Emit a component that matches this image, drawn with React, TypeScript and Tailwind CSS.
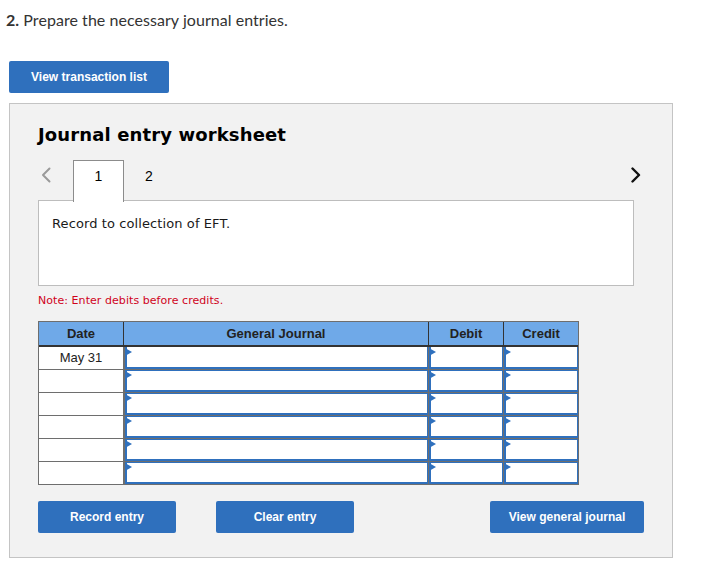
const rows = ["May 31", "", "", "", "", ""];

function Chevron({ dir, color, sw }: { dir: "left" | "right"; color: string; sw: string }) {
  return (
    <svg width="10" height="16" viewBox="0 0 10 16" fill="none">
      <path d={dir === "left" ? "M8.5 1.5 L2 8 L8.5 14.5" : "M1.5 1.5 L8 8 L1.5 14.5"} stroke={color} strokeWidth={sw} strokeLinecap="round" strokeLinejoin="round" />
    </svg>
  );
}

function EntryCell({ width, top }: { width: string; top: boolean }) {
  return (
    <div className={`relative h-full shrink-0 ml-px bg-white border-l-2 border-r border-b-2 border-[#2f70bd] ${top ? "border-t-0" : "border-t"} ${width}`}>
      <div className={`absolute left-[-2px] ${top ? "top-[1px]" : "top-[0px]"} w-0 h-0 border-y-[4px] border-y-transparent border-l-[7px] border-l-[#2f70bd]`} />
    </div>
  );
}

function Btn({ label, width }: { label: string; width: string }) {
  return (
    <button className={`h-8 ${width} rounded-[2px] bg-[#2f70bd] text-white text-[12px] font-bold font-['Liberation_Sans',sans-serif]`}>
      {label}
    </button>
  );
}

export default function App() {
  return (
    <div className="w-[715px] h-[577px] bg-white pl-[9px] overflow-hidden font-['Liberation_Sans',sans-serif]">
      <p className="pt-[10px] -ml-[3px] h-[61px] text-[16px] leading-5 tracking-[0.05px] text-[#333] font-['Lato',sans-serif]">
        <span className="font-bold">2.</span> Prepare the necessary journal entries.
      </p>
      <Btn label="View transaction list" width="w-40" />
      <div className="mt-[10px] w-[664px] h-[455px] border border-[#c4c4c4] bg-[#f2f2f2] pl-[28px] pt-[20px]">
        <h2 className="h-[21px] text-[18px] leading-[21px] tracking-[0.13px] font-bold text-black font-['DejaVu_Sans',sans-serif]">
          Journal entry worksheet
        </h2>
        <div className="flex items-center h-[41px] mt-[15px] relative z-10 w-[596px]">
          <div className="w-[35px] pl-[3px] -mt-[12px]">
            <Chevron dir="left" color="#9a9a9a" sw="2" />
          </div>
          <div className="w-[51px] h-[42px] bg-white border border-[#8c8c8c] border-b-0 flex items-center justify-center text-[14px] text-black pb-[9px]">1</div>
          <div className="w-[50px] text-center text-[14px] text-black pb-[8px]">2</div>
          <div className="ml-auto -mt-[12px] -mr-[7px]">
            <Chevron dir="right" color="#111" sw="2.4" />
          </div>
        </div>
        <div className="w-[596px] h-[86px] -mt-px bg-white border border-[#bdbdbd] px-[13px] pt-[15px] text-[13px] leading-4 tracking-[0.1px] text-[#1a1a1a] font-['DejaVu_Sans',sans-serif]">
          Record to collection of EFT.
        </div>
        <p className="mt-[7px] h-4 text-[11px] leading-4 tracking-[0.06px] text-[#d0021b] font-['DejaVu_Sans',sans-serif]">
          Note: Enter debits before credits.
        </p>
        <div className="mt-[12px] w-[541px] border-x border-t border-[#6e6e6e]">
          <div className="flex h-[25px] bg-[#6fa9e8] border-b-2 border-[#333] text-[13px] leading-[23px] font-bold text-[#222] text-center">
            <div className="w-[85px] border-r border-[#333] shrink-0">Date</div>
            <div className="w-[305px] border-r border-[#333] shrink-0">General Journal</div>
            <div className="w-[75px] border-r border-[#333] shrink-0">Debit</div>
            <div className="flex-1">Credit</div>
          </div>
          {rows.map((date, i) => (
            <div key={i} className="flex h-[23px] border-b border-[#6e6e6e] bg-[#6e6e6e]">
              <div className="w-[85px] shrink-0 bg-white border-r border-[#6e6e6e] text-center text-[13px] leading-[21px] text-[#222]">
                {date}
              </div>
              <EntryCell width="w-[303px]" top={i === 0} />
              <EntryCell width="w-[74px]" top={i === 0} />
              <EntryCell width="w-[74px]" top={i === 0} />
            </div>
          ))}
        </div>
        <div className="flex mt-4 w-[606px] justify-between">
          <div className="flex gap-10">
            <Btn label="Record entry" width="w-[138px]" />
            <Btn label="Clear entry" width="w-[138px]" />
          </div>
          <Btn label="View general journal" width="w-[154px]" />
        </div>
      </div>
    </div>
  );
}
